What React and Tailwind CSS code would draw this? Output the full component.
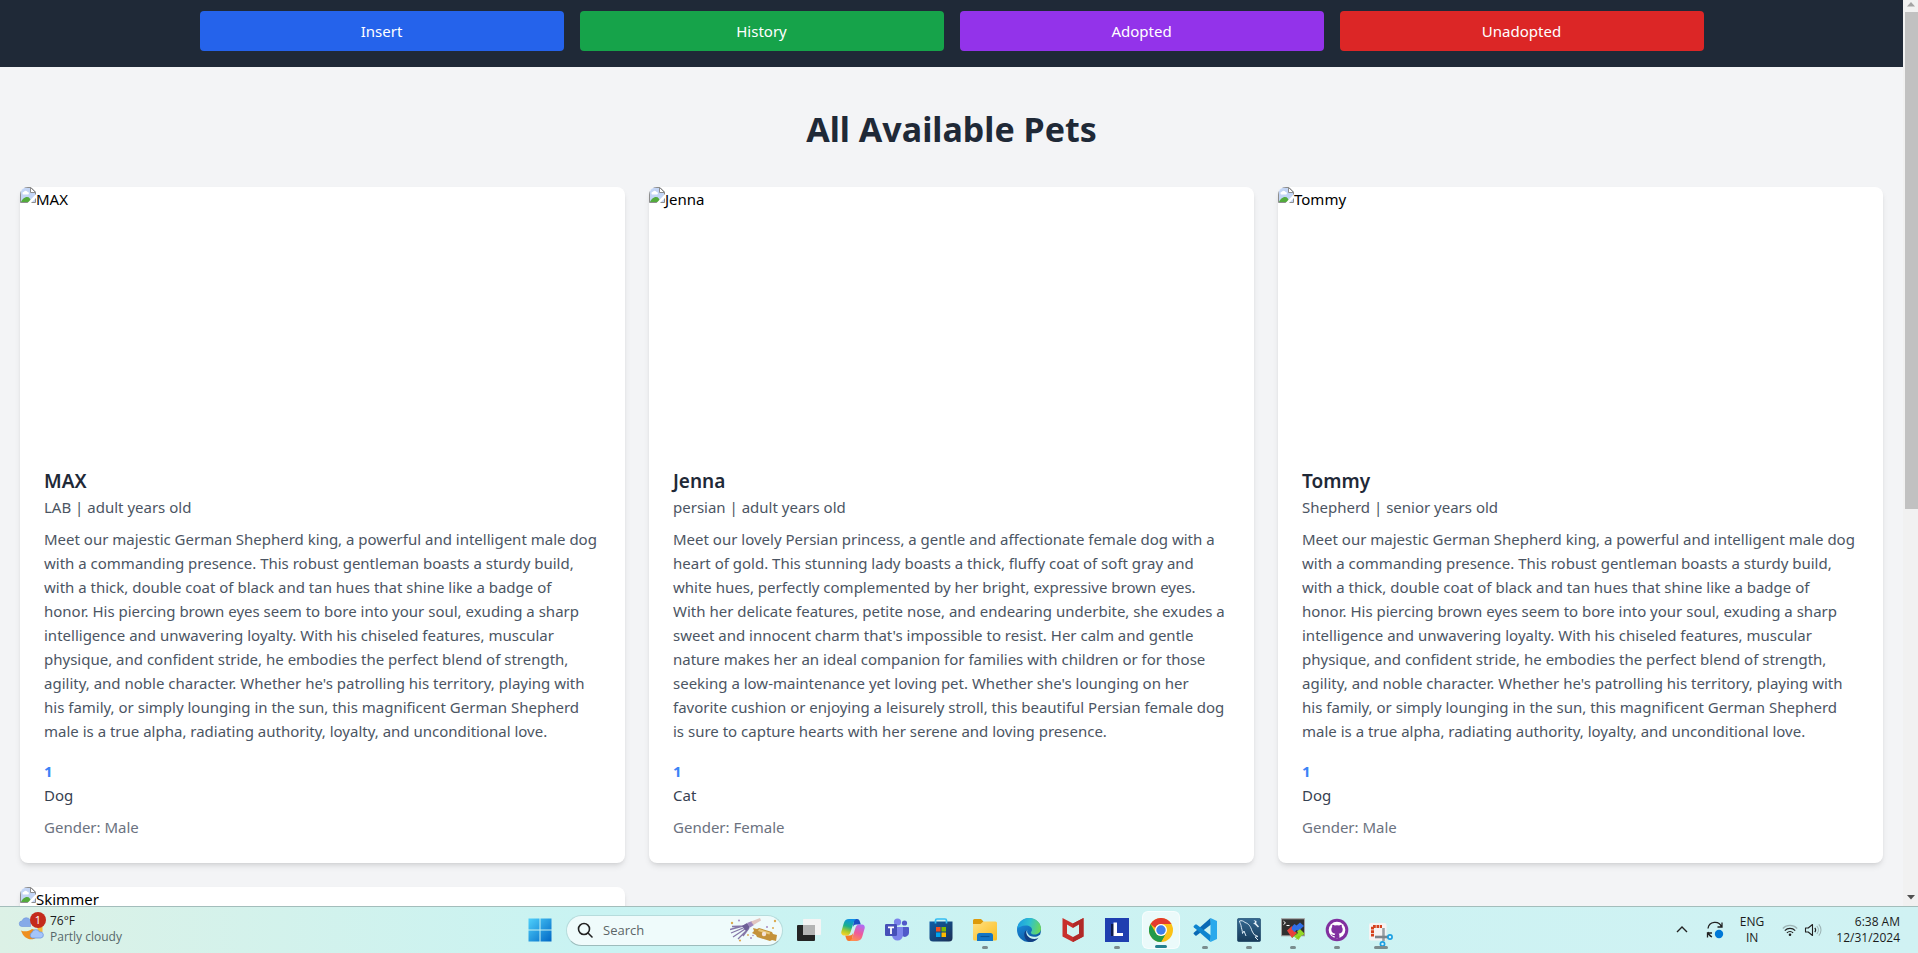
const SHEPHERD =
  "Meet our majestic German Shepherd king, a powerful and intelligent male dog with a commanding presence. This robust gentleman boasts a sturdy build, with a thick, double coat of black and tan hues that shine like a badge of honor. His piercing brown eyes seem to bore into your soul, exuding a sharp intelligence and unwavering loyalty. With his chiseled features, muscular physique, and confident stride, he embodies the perfect blend of strength, agility, and noble character. Whether he's patrolling his territory, playing with his family, or simply lounging in the sun, this magnificent German Shepherd male is a true alpha, radiating authority, loyalty, and unconditional love.";
const PERSIAN =
  "Meet our lovely Persian princess, a gentle and affectionate female dog with a heart of gold. This stunning lady boasts a thick, fluffy coat of soft gray and white hues, perfectly complemented by her bright, expressive brown eyes. With her delicate features, petite nose, and endearing underbite, she exudes a sweet and innocent charm that's impossible to resist. Her calm and gentle nature makes her an ideal companion for families with children or for those seeking a low-maintenance yet loving pet. Whether she's lounging on her favorite cushion or enjoying a leisurely stroll, this beautiful Persian female dog is sure to capture hearts with her serene and loving presence.";

const pets = [
  { name: "MAX", breed: "LAB", age: "adult", text: SHEPHERD, count: 1, kind: "Dog", gender: "Male" },
  { name: "Jenna", breed: "persian", age: "adult", text: PERSIAN, count: 1, kind: "Cat", gender: "Female" },
  { name: "Tommy", breed: "Shepherd", age: "senior", text: SHEPHERD, count: 1, kind: "Dog", gender: "Male" },
  { name: "Skimmer" },
];

const actions = [
  { label: "Insert", color: "bg-[#2563eb]" },
  { label: "History", color: "bg-[#16a34a]" },
  { label: "Adopted", color: "bg-[#9333ea]" },
  { label: "Unadopted", color: "bg-[#dc2626]" },
];

function MissingImage() {
  return (
    <svg className="size-4 shrink-0" viewBox="0 0 16 16" aria-hidden="true">
      <path d="M.5 .5h10.500l4.500 4.500v10.500h-15z" fill="#c3d5f5" stroke="#8d8d8d" />
      <path d="M10.500 .5v5h5z" fill="#fff" stroke="#8d8d8d" />
      <path d="M2.500 6.500a1.500 1.500 0 0 1 1.500-1.800 2 2 0 0 1 3.600.4 1.200 1.200 0 0 1 .2 2.400H3.400a1 1 0 0 1-.9-1z" fill="#fff" />
      <path d="M1 15c1-2.500 3.500-5 6-5s3.500 2 4.500 5z" fill="#53ab3c" />
      <path d="M16.500 6.500 7.500 16h3.500l5.500-5.500z" fill="#fff" />
    </svg>
  );
}

function PetCard({ pet }) {
  return (
    <article className="overflow-hidden rounded-lg bg-white shadow-md">
      <div role="img" aria-label={pet.name} className="flex h-64 items-start text-black">
        <MissingImage />
        <span>{pet.name}</span>
      </div>
      {pet.text && (
        <div className="p-6">
          <h2 className="text-[19px] leading-7 font-semibold text-[#1f2937]">{pet.name}</h2>
          <p className="text-[#4b5563]">
            {pet.breed} | {pet.age} years old
          </p>
          <p className="mt-2 pr-[3px] text-[#4b5563]">{pet.text}</p>
          <p className="mt-4 font-bold text-[#3b82f6]">{pet.count}</p>
          <p className="text-[#374151]">{pet.kind}</p>
          <p className="mt-2 text-[#6b7280]">Gender: {pet.gender}</p>
        </div>
      )}
    </article>
  );
}

function StartIcon() {
  return (
    <svg className="size-6" viewBox="0 0 24 24">
      <defs>
        <linearGradient id="start" x1="0" y1="0" x2="1" y2="1">
          <stop offset="0" stopColor="#4fd0fb" />
          <stop offset="1" stopColor="#0067c5" />
        </linearGradient>
      </defs>
      <path d="M.5 .5h11v11H.5zM12.500 .5h11v11h-11zM.5 12.500h11v11H.5zM12.500 12.500h11v11h-11z" fill="url(#start)" />
    </svg>
  );
}

function TaskViewIcon() {
  return (
    <svg className="size-6" viewBox="0 0 24 24">
      <rect x="0" y="7" width="18" height="16" rx="1" fill="#242424" />
      <rect x="6" y="1" width="18" height="16" rx="1" fill="#f4f4f4" />
      <path d="M6 7h12v10H7a1 1 0 0 1-1-1z" fill="#b4b4b4" />
    </svg>
  );
}

function CopilotIcon() {
  return (
    <svg className="size-6" viewBox="0 0 24 24">
      <defs>
        <linearGradient id="cop1" x1=".6" y1="0" x2=".3" y2="1">
          <stop offset="0" stopColor="#0d8fe8" />
          <stop offset=".45" stopColor="#18b08c" />
          <stop offset=".75" stopColor="#a9cb2c" />
          <stop offset="1" stopColor="#f7d229" />
        </linearGradient>
        <linearGradient id="cop2" x1=".7" y1="0" x2=".3" y2="1">
          <stop offset="0" stopColor="#b06cf4" />
          <stop offset=".5" stopColor="#ee5a9b" />
          <stop offset="1" stopColor="#ff8f4f" />
        </linearGradient>
      </defs>
      <path d="M13 1h3c1.800 0 2.400 1.200 3 3l.8 2.500h-4.500c-2 0-3 1-3.500 3z" fill="#1a4fc4" />
      <path d="M11 23H8c-1.800 0-2.400-1.200-3-3l-.8-2.500h4.500c2 0 3-1 3.500-3z" fill="#f5772d" />
      <path d="M8 1h7.500c-1.800.6-2.500 2.200-3.200 4.500L9.600 14c-.7 2.300-1.800 3.500-4 3.500H3C.8 17.500-.2 15.600.4 13.400l2.300-8C3.600 2.500 5.200 1 8 1z" fill="url(#cop1)" />
      <path d="M16 23H8.500c1.800-.6 2.500-2.200 3.200-4.500l2.700-8.500c.7-2.300 1.800-3.500 4-3.500H21c2.200 0 3.200 1.900 2.600 4.100l-2.300 8C20.400 21.500 18.800 23 16 23z" fill="url(#cop2)" />
    </svg>
  );
}

function TeamsIcon() {
  return (
    <svg className="size-6" viewBox="0 0 24 24">
      <circle cx="19.500" cy="5" r="2.600" fill="#5059c9" />
      <path d="M16 9h7a1 1 0 0 1 1 1v5a4 4 0 0 1-7 2.500z" fill="#5059c9" />
      <circle cx="12.500" cy="4" r="3.600" fill="#7b83eb" />
      <path d="M7 9h11v8a5.500 5.500 0 0 1-11 0z" fill="#7b83eb" />
      <rect x="0" y="6" width="12" height="12" rx="1.200" fill="#4650b8" />
      <path d="M3 8.500h6v1.700H6.900V16H5.100v-5.800H3z" fill="#fff" />
    </svg>
  );
}

function StoreIcon() {
  return (
    <svg className="size-6" viewBox="0 0 24 24">
      <defs>
        <linearGradient id="store" x1="0" y1="0" x2="1" y2="1">
          <stop offset="0" stopColor="#0f5ea8" />
          <stop offset="1" stopColor="#1c2f54" />
        </linearGradient>
      </defs>
      <path d="M.5 3.500h23V20a3.500 3.500 0 0 1-3.500 3.500H4A3.500 3.500 0 0 1 .5 20z" fill="url(#store)" />
      <path d="M6.500 5.500V2.500A1.500 1.500 0 0 1 8 1h8a1.500 1.500 0 0 1 1.500 1.500v3" fill="none" stroke="#35bdf2" strokeWidth="1.700" />
      <path d="M7 9h4.500v4.500H7z" fill="#f25022" />
      <path d="M12.500 9H17v4.500h-4.500z" fill="#7fba00" />
      <path d="M7 14.500h4.500V19H7z" fill="#00a4ef" />
      <path d="M12.500 14.500H17V19h-4.500z" fill="#ffb900" />
    </svg>
  );
}

function FolderIcon() {
  return (
    <svg className="size-6" viewBox="0 0 24 24">
      <defs>
        <linearGradient id="folder" x1="0" y1="0" x2="1" y2="1">
          <stop offset="0" stopColor="#ffe083" />
          <stop offset="1" stopColor="#fbbd1c" />
        </linearGradient>
      </defs>
      <path d="M0 2.500A1.500 1.500 0 0 1 1.500 1H8l2.500 2.500L8 7H0z" fill="#dd9a0b" />
      <path d="M0 6h7.500l3-2.500h12A1.500 1.500 0 0 1 24 5v16a1.500 1.500 0 0 1-1.500 1.500h-21A1.500 1.500 0 0 1 0 21z" fill="url(#folder)" />
      <path d="M4 23v-5.500A2.500 2.500 0 0 1 6.500 15h11a2.500 2.500 0 0 1 2.500 2.500V23z" fill="#1476c6" />
      <path d="M7.500 18.500h9" stroke="#0b5394" strokeWidth="1.200" />
    </svg>
  );
}

function EdgeIcon() {
  return (
    <svg className="size-6" viewBox="0 0 24 24">
      <defs>
        <linearGradient id="edge1" x1="0" y1=".3" x2="1" y2=".5">
          <stop offset="0" stopColor="#1b9de2" />
          <stop offset=".5" stopColor="#2fc0d0" />
          <stop offset="1" stopColor="#6ad85a" />
        </linearGradient>
        <linearGradient id="edge2" x1="0" y1="0" x2=".6" y2="1">
          <stop offset="0" stopColor="#1f97e6" />
          <stop offset="1" stopColor="#0c59a4" />
        </linearGradient>
      </defs>
      <circle cx="12" cy="12" r="12" fill="url(#edge2)" />
      <path d="M.2 10.500C1 4.500 6 0 12 0c7 0 12 5 12 10.500 0 3.500-2.800 6-6.200 6-2.600 0-4-1-4-1.800s1.200-1.200 1.200-3.100C15 9.300 12.300 7.500 9 7.500c-4.500 0-7.500 2-8.800 3z" fill="url(#edge1)" />
      <path d="M9.500 12c-1.200 3.500 1.500 9.300 8.200 8.700 1.800-.2 3.200-.8 4.300-1.500A12 12 0 0 1 13 24C7.500 23.500 5.300 14.500 9.500 12z" fill="#123f83" />
      <path d="M10.500 11.500c-1.500 2.500.8 7.300 6.500 7.300 3 0 4.500-1 6-2.100l1 .3-1.800 2.600c-1.300.8-2.900 1.300-4.700 1.300-6.700 0-10-6-7-9.400z" fill="#cef3f1" />
    </svg>
  );
}

function McAfeeIcon() {
  return (
    <svg className="size-6" viewBox="0 0 24 24">
      <path d="M1.500 0 12 5.500 22.500 0v18.500L12 24 1.500 18.500z" fill="#c8302c" />
      <path d="M22.500 0v18.500L12 24V5.500z" fill="#b02a28" />
      <path d="M6 6.500 12 10l6-3.500v9.300l-6 3.200-6-3.200z" fill="#d0f4f2" />
    </svg>
  );
}

function LIcon() {
  return (
    <svg className="size-6" viewBox="0 0 24 24">
      <path d="M0 0h24v24H0z" fill="#1f3fb0" />
      <path d="M6 6h3v12H6z" fill="#0e1b4b" />
      <path d="M8.500 4.500h3.500v10.500h6v3H8.500z" fill="#fff" />
    </svg>
  );
}

function ChromeIcon() {
  return (
    <svg className="size-6" viewBox="0 0 24 24">
      <circle cx="12" cy="12" r="12" fill="#fbc116" />
      <path d="M1.600 6A12 12 0 0 1 22.400 6H12a6 6 0 0 0-5.600 4z" fill="#e33b2e" />
      <path d="M1.600 6 6.800 15A6 6 0 0 0 12 18h3.400L12 24A12 12 0 0 1 1.600 6z" fill="#229a4a" />
      <path d="M12 24 17.200 15A6 6 0 0 1 12 18a6 6 0 0 1-2-.4z" fill="#229a4a" />
      <circle cx="12" cy="12" r="6" fill="#fff" />
      <circle cx="12" cy="12" r="4.700" fill="#3f7fea" />
    </svg>
  );
}

function CodeIcon() {
  return (
    <svg className="size-6" viewBox="0 0 24 24">
      <path d="M17.500 0 .8 14.800a.9.900 0 0 0 0 1.300l1.500 1.300c.4.3.9.300 1.300 0L18 6.500z" fill="#0a69b5" />
      <path d="M17.500 24 .8 9.200a.9.900 0 0 1 0-1.300l1.500-1.300c.4-.3.900-.3 1.300 0L18 17.500z" fill="#0d84cf" />
      <path d="M17.500 0 24 3v18l-6.500 3z" fill="#2aa9ec" />
    </svg>
  );
}

function MySqlIcon() {
  return (
    <svg className="size-6" viewBox="0 0 24 24">
      <defs>
        <linearGradient id="sql" x1="0" y1="0" x2="0" y2="1">
          <stop offset="0" stopColor="#356a93" />
          <stop offset="1" stopColor="#173a58" />
        </linearGradient>
      </defs>
      <rect x=".3" y=".3" width="23.400" height="23.400" rx="2" fill="url(#sql)" stroke="#1d4566" strokeWidth=".6" />
      <path d="M2.500 3c2-.8 4 0 5.500 1.500 3.500 1 5.500 3.500 7 8.500l2 3.500 4 2-3 .5 3 3M2.500 3c.3 2 1 2.500 1.500 4.500.5 3.500 1.500 5 1.500 8l1.500-2.500 2 5" fill="none" stroke="#dbe9f3" strokeWidth="1" strokeLinejoin="round" />
      <path d="m16.500 2 1.500 1.500L17.500 5l-1.500.3 2 1.200 3 3 1-1-2.700-3 .2-2.500z" fill="#e6f0f7" />
    </svg>
  );
}

function TerminalIcon() {
  return (
    <svg className="size-6" viewBox="0 0 24 24">
      <rect x=".5" y=".8" width="23" height="17" fill="#303030" stroke="#a3a0a0" />
      <path d="m2.500 3.200 2 1.700-2 1.700M5.500 7.500h3" fill="none" stroke="#fff" strokeWidth="1" />
      <path d="m6 12.500 5-4.500 2.500 2.500-1 1.500 3.500 3-5 5z" fill="#e8413b" />
      <path d="m11.500 8 2-2 2 1.500 3.500-3 4 3.500-5.500 5-2-1-2 2-3-3z" fill="#2f6fe8" />
      <path d="m13 18.500 4-3.500-1-1.500 3-2.500 4.500 4.500-1.500 2-1-.5-3.500 5-2-1.500z" fill="#93d728" />
      <path d="m11 20 5-5M14.500 22l4-4" stroke="#6aa71a" strokeWidth=".6" />
    </svg>
  );
}

function GithubIcon() {
  return (
    <svg className="size-6" viewBox="0 0 24 24">
      <circle cx="12" cy="12" r="11.300" fill="#81309f" />
      <circle cx="12" cy="12" r="8.300" fill="#fff" />
      <path d="M9.600 20v-2c-2.400.4-2.600-1.300-3.600-1.800 1.700-.3 2 1.300 3.700.8.100-.7.300-1 .6-1.300-2.500-.3-4-1.500-4-4.200 0-1 .3-1.700.9-2.400-.2-.7-.2-1.500.2-2.400 1 0 1.700.4 2.400.9a8 8 0 0 1 4.400 0c.7-.5 1.400-.9 2.400-.9.400.9.400 1.700.2 2.400.6.700.9 1.400.9 2.400 0 2.700-1.500 3.900-4 4.200.5.400.7 1 .7 1.800V20z" fill="#81309f" />
    </svg>
  );
}

function SnipIcon() {
  return (
    <svg className="size-6 overflow-visible" viewBox="0 0 24 24">
      <rect x="0" y="5" width="17.500" height="17.500" rx="2" fill="#f5f3f3" />
      <path d="M3.500 18.500V8.500h9.500" fill="none" stroke="#d5421d" strokeWidth="3" strokeDasharray="2.800 .7" />
      <path d="M14.500 10v13" stroke="#9aa0a5" strokeWidth="2.600" />
      <path d="M6 19h13" stroke="#7d848a" strokeWidth="2.600" />
      <circle cx="21" cy="19" r="2.100" fill="#d9f1fb" stroke="#1ba0e2" strokeWidth="1.700" />
      <circle cx="13.500" cy="26" r="2.100" fill="#d9f1fb" stroke="#1ba0e2" strokeWidth="1.700" />
    </svg>
  );
}

function PartyArt() {
  return (
    <svg className="h-6 w-12" viewBox="0 0 48 24">
      <path d="M0 11.500 17 7M1 15 18 8M3 19 18 9M8 21 19 10M13 18l6-8M2 8.500 17 8" stroke="#8577a8" strokeWidth="1.300" />
      <path d="M12 8 17 5l3 4-4 4z" fill="#6d5f96" />
      <path d="m17 5 5-2 2 4-4 2.500z" fill="#9d87bd" />
      <path d="M21 3.500 30 0l1 2.500L23.500 7z" fill="#e0c5c0" />
      <path d="m23 10 4 1 2-1 13 4 1 2 4 1-1 6-4-1-2 1-13-4-1-2-4-2 2-2z" fill="#c4923a" />
      <path d="m29 11 11 3.500-.5 2L28 13z" fill="#e8c779" />
      <circle cx="34" cy="16" r="2.200" fill="#f4e3d8" />
      <g fill="#dba94f">
        <circle cx="2" cy="5" r="1.200" />
        <circle cx="45" cy="3" r="1.200" />
        <circle cx="43" cy="10" r="1" />
        <circle cx="10" cy="22.500" r="1.100" />
        <circle cx="18" cy="17" r=".9" />
      </g>
      <g fill="#a78bc0">
        <circle cx="9" cy="2.500" r="1" />
        <circle cx="37" cy="9" r="1" />
        <circle cx="21" cy="20" r="1" />
        <circle cx="23" cy="17.500" r=".8" />
      </g>
    </svg>
  );
}

function WeatherIcon() {
  return (
    <svg className="size-7" viewBox="0 0 28 28">
      <path d="M20 13h4.500v6H19z" fill="#f6b73c" />
      <path d="M3 17.500c3 1.500 8 1 11-1.500l7 2-2 6c-5 4.500-13 2.500-16-6.500z" fill="#ee8f1f" />
      <path d="M4 13.500a2.700 2.700 0 0 1 0-5.500 4.500 4.500 0 0 1 8.500-.5V13.500z" fill="#86aae8" stroke="#6d93dc" strokeWidth=".6" />
      <path d="M14 25a3 3 0 0 1 0-5.500 4 4 0 0 1 7.500-.5A3 3 0 0 1 23 25z" fill="#a5c5fa" stroke="#6f97df" strokeWidth=".8" />
    </svg>
  );
}

const apps = [
  { name: "Task view", Icon: TaskViewIcon },
  { name: "Copilot", Icon: CopilotIcon },
  { name: "Teams", Icon: TeamsIcon },
  { name: "Store", Icon: StoreIcon },
  { name: "File Explorer", Icon: FolderIcon, running: true },
  { name: "Edge", Icon: EdgeIcon },
  { name: "McAfee", Icon: McAfeeIcon },
  { name: "L", Icon: LIcon, running: true },
  { name: "Chrome", Icon: ChromeIcon, active: true },
  { name: "Code", Icon: CodeIcon, running: true },
  { name: "MySQL Workbench", Icon: MySqlIcon, running: true },
  { name: "Terminal", Icon: TerminalIcon, running: true },
  { name: "GitHub", Icon: GithubIcon, running: true },
  { name: "Snipping Tool", Icon: SnipIcon, wide: true },
];

function AppButton({ app }) {
  const { Icon } = app;
  return (
    <button type="button" aria-label={app.name} className="flex h-full w-11 justify-center py-1">
      <span
        className={
          app.active
            ? "flex h-[38px] w-[38px] flex-col items-center justify-between rounded-md border border-white/60 bg-white/60 pt-1.5"
            : "flex h-[38px] w-[38px] flex-col items-center justify-between pt-[7px]"
        }
      >
        <Icon />
        {app.running && <span className="h-[3px] w-1.5 rounded-full bg-[#7a8c8e]" />}
        {app.active && <span className="h-[3px] w-3 rounded-full bg-[#24808f]" />}
        {app.wide && <span className="h-[3px] w-3.5 rounded-full bg-[#7a8c8e]" />}
      </span>
    </button>
  );
}

function Taskbar() {
  return (
    <footer className="grid h-[47px] shrink-0 grid-cols-[1fr_auto_1fr] border-t border-[#a3bdbb] bg-linear-to-r from-[#dcf1e6] via-[#c9f3f2] via-30% to-[#d0f2f3] font-['Open_Sans','Noto_Sans',sans-serif] text-xs leading-4 text-[#1b1b1b]">
      <button type="button" className="flex items-start gap-1 pt-1.5 pl-[18px] text-left">
        <span className="relative block">
          <WeatherIcon />
          <span className="absolute -top-px left-3 flex size-4 items-center justify-center rounded-full bg-[#c42b1c] text-[11px] text-white">1</span>
        </span>
        <span className="block">
          <span className="block">76°F</span>
          <span className="block text-[#56686a]">Partly cloudy</span>
        </span>
      </button>

      <div className="flex items-center pl-[3px]">
        <button type="button" aria-label="Start" className="flex h-full w-11 items-center justify-center">
          <StartIcon />
        </button>
        <label className="mx-1 flex h-[31px] w-[217px] items-center rounded-full border border-[#b6dcdc] border-b-[#9dbcbc] bg-[#effbfb] pr-1 pl-2.5">
          <svg className="size-4 shrink-0" viewBox="0 0 16 16" fill="none" stroke="#222" strokeWidth="1.600">
            <circle cx="7" cy="7" r="5.500" />
            <path d="m11 11 4 4" strokeLinecap="round" />
          </svg>
          <input type="text" aria-label="Search" placeholder="Search" className="w-0 min-w-0 flex-1 bg-transparent pl-2.5 text-[13px] outline-none placeholder:text-[#5c6667]" />
          <PartyArt />
        </label>
        {apps.map((app) => (
          <AppButton key={app.name} app={app} />
        ))}
      </div>

      <div className="flex items-center justify-end pr-[18px]">
        <button type="button" aria-label="Show hidden icons" className="mr-4">
          <svg className="size-4" viewBox="0 0 16 16" fill="none" stroke="#222" strokeWidth="1.400">
            <path d="m3 10 5-5 5 5" />
          </svg>
        </button>
        <button type="button" aria-label="Updates" className="mr-4">
          <svg className="size-[18px]" viewBox="0 0 18 18" fill="none" stroke="#222" strokeWidth="1.300">
            <path d="M2 7.500A7 7 0 0 1 15.500 6M16 1.500V6h-4.500M2 11a7 7 0 0 0 4 5M1.500 16.500V12H6" />
            <circle cx="13" cy="13" r="4.200" fill="#0078d7" stroke="none" />
          </svg>
        </button>
        <button type="button" className="mr-[18px] text-center">
          <span className="block">ENG</span>
          <span className="block">IN</span>
        </button>
        <button type="button" aria-label="Network and volume" className="mr-3.5 flex items-center gap-1.5">
          <svg className="size-4" viewBox="0 0 16 16" fill="none" stroke="#222" strokeWidth="1.200">
            <path d="M.8 6.500a10 10 0 0 1 14.400 0" stroke="#9eb5b6" />
            <path d="M2.800 8.600a7.300 7.300 0 0 1 10.400 0M4.900 10.800a4.300 4.300 0 0 1 6.200 0" />
            <circle cx="8" cy="12.800" r="1.300" fill="#222" stroke="none" />
          </svg>
          <svg className="size-[18px]" viewBox="0 0 18 18" fill="none" stroke="#222" strokeWidth="1.100">
            <path d="M1.500 7v4h2.700L8.500 14.500v-11L4.200 7z" strokeLinejoin="round" />
            <path d="M10.800 6.800a3.500 3.500 0 0 1 0 4.400" />
            <path d="M12.800 5a6 6 0 0 1 0 8M14.800 3.300a8.500 8.500 0 0 1 0 11.400" stroke="#9eb5b6" />
          </svg>
        </button>
        <button type="button" className="text-right">
          <span className="block">6:38 AM</span>
          <span className="block">12/31/2024</span>
        </button>
      </div>
    </footer>
  );
}

export default function App() {
  return (
    <div className="flex h-screen flex-col overflow-hidden font-['Noto_Sans','Open_Sans',sans-serif] text-[15px] leading-6">
      <div className="flex min-h-0 flex-1">
        <div className="min-w-0 flex-1 overflow-hidden bg-[#f3f4f6]">
          <header className="bg-[#1f2937] pt-[11px] pb-4">
            <nav className="mx-auto grid max-w-[1536px] grid-cols-4 gap-4 px-4">
              {actions.map((action) => (
                <button key={action.label} type="button" className={`h-10 rounded text-white ${action.color}`}>
                  {action.label}
                </button>
              ))}
            </nav>
          </header>
          <main className="px-5 pt-10">
            <h1 className="mb-9 text-center text-[34px] leading-11 font-bold text-[#1f2937]">All Available Pets</h1>
            <div className="grid grid-cols-3 items-start gap-6">
              {pets.map((pet) => (
                <PetCard key={pet.name} pet={pet} />
              ))}
            </div>
          </main>
        </div>
        <div aria-hidden="true" className="flex w-[15px] flex-col items-center bg-[#f1f1f1]">
          <svg className="h-3 w-2 shrink-0" viewBox="0 0 8 12">
            <path d="M0 6.500 4 2l4 4.500z" fill="#a3a3a3" />
          </svg>
          <div className="h-[497px] w-[13px] self-end bg-[#c1c1c1]" />
          <svg className="mt-auto h-4 w-2" viewBox="0 0 8 16">
            <path d="M0 5h8L4 9.500z" fill="#505050" />
          </svg>
        </div>
      </div>
      <Taskbar />
    </div>
  );
}
